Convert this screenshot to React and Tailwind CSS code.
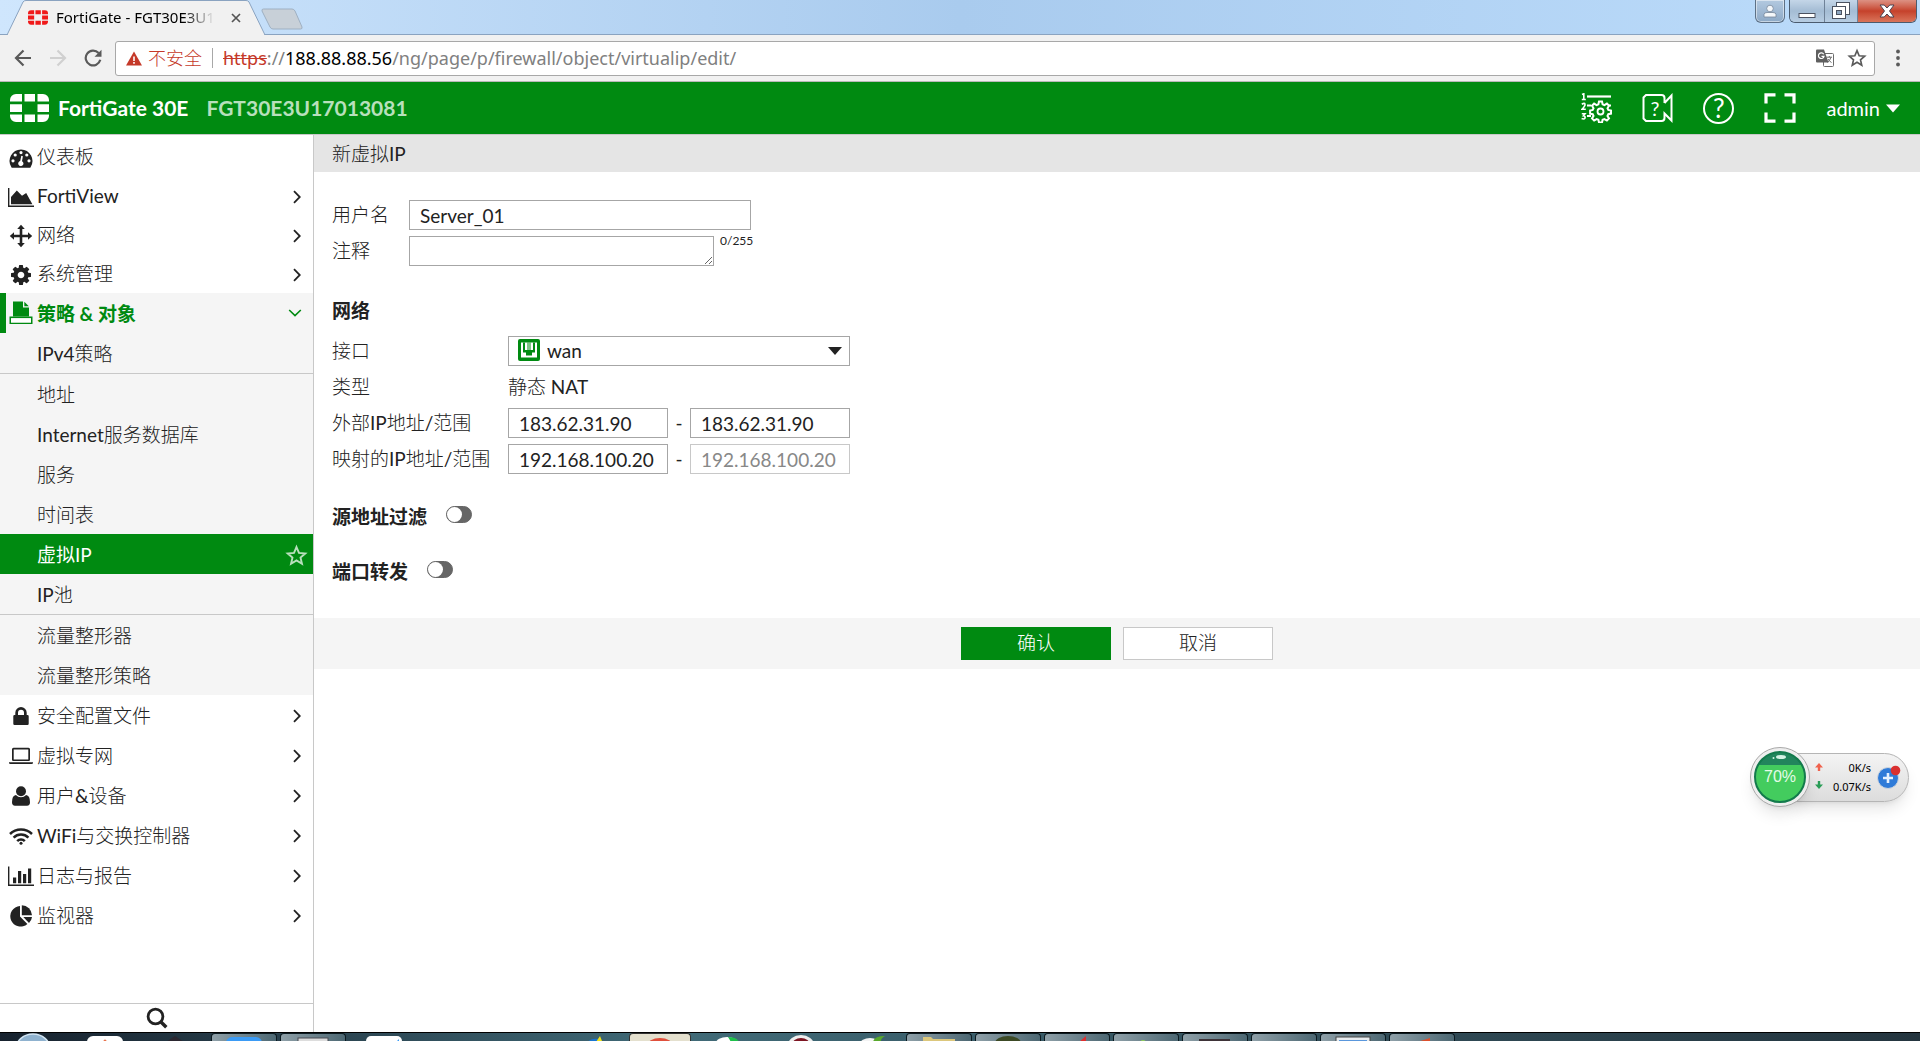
import { useState } from "react";

// ---------- icons ----------

const FortinetLogo = ({ className }) => (
  <svg viewBox="0 0 39 28" className={className} fill="currentColor" aria-hidden="true">
    <path d="M6 0H12V7.500H0V6A6 6 0 0 1 6 0zM14.500 0H25V7.500H14.500zM27.500 0H33A6 6 0 0 1 39 6V7.500H27.500zM0 10.200H12V18H0zM27.500 10.200H39V18H27.500zM0 20.500H12V28H6A6 6 0 0 1 0 22zM14.500 20.500H25V28H14.500zM27.500 20.500H39V22A6 6 0 0 1 33 28H27.500z" />
  </svg>
);

const DashboardIcon = () => (
  <svg viewBox="0 0 24 24" className="w-6 h-6" fill="currentColor">
    <path
      fillRule="evenodd"
      d="M12 3.500A11.500 11.500 0 0 0 2.400 21.200Q2.700 21.700 3.300 21.700H20.700Q21.300 21.700 21.600 21.200A11.500 11.500 0 0 0 12 3.500zM12 5a1.600 1.600 0 1 1 0 3.200a1.600 1.600 0 0 1 0-3.200zM6.200 7.400a1.600 1.600 0 1 1 0 3.200a1.600 1.600 0 0 1 0-3.200zM17.800 7.400a1.600 1.600 0 1 1 0 3.200a1.600 1.600 0 0 1 0-3.200zM4 13.200a1.600 1.600 0 1 1 0 3.200a1.600 1.600 0 0 1 0-3.200zM20 13.200a1.600 1.600 0 1 1 0 3.200a1.600 1.600 0 0 1 0-3.200zM12.300 9.800L13.900 10.200L13 15.200A2.600 2.600 0 1 1 11.200 15z"
    />
  </svg>
);

const AreaIcon = () => (
  <svg viewBox="0 0 26 22" className="w-[26px] h-[22px]" fill="currentColor">
    <path d="M0 2h1.400v17.400H26V21H0zM3 18.200V11L8.800 4.600L14 9.700L18.200 7L24.400 18.200z" />
  </svg>
);

const MoveIcon = () => (
  <svg viewBox="0 0 24 24" className="w-6 h-6" fill="currentColor">
    <path d="M12 .8L15.800 5H13.300V10.700H19V8.200L23.200 12L19 15.800V13.300H13.300V19H15.800L12 23.200L8.200 19H10.700V13.300H5V15.800L.8 12L5 8.200V10.700H10.700V5H8.200z" />
  </svg>
);

const CogIcon = () => (
  <svg viewBox="0 128 1536 1536" className="w-5 h-5" fill="currentColor">
    <path d="M1024 896q0-106-75-181t-181-75-181 75-75 181 75 181 181 75 181-75 75-181zm512-109v222q0 12-8 23t-20 13l-185 28q-19 54-39 91 35 50 107 138 10 12 10 25t-9 23q-27 37-99 108t-94 71q-12 0-26-9l-138-108q-44 23-91 38-16 136-29 186-7 28-36 28h-222q-14 0-24.500-8.500t-11.500-21.500l-28-184q-49-16-90-37l-141 107q-10 9-25 9-14 0-25-11-126-114-165-168-7-10-7-23 0-12 8-23 15-21 51-66.500t54-70.500q-27-50-41-99l-183-27q-13-2-21-12.500t-8-23.500v-222q0-12 8-23t19-13l186-28q14-46 39-92-40-57-107-138-10-12-10-24 0-10 9-23 26-36 98.500-107.500t94.500-71.500q13 0 26 10l138 107q44-23 91-38 16-136 29-186 7-28 36-28h222q14 0 24.500 8.500t11.500 21.500l28 184q49 16 90 37l142-107q9-9 24-9 13 0 25 10 129 119 165 170 7 8 7 22 0 12-8 23-15 21-51 66.500t-54 70.500q26 50 41 98l183 28q13 2 21 12.500t8 23.500z" />
  </svg>
);

const PolicyIcon = () => (
  <svg viewBox="0 0 24 24" className="w-6 h-6" fill="currentColor">
    <path d="M4 .5H14V6.500H20V15.500H4z" />
    <path d="M15.300 .8L19.800 5.300H15.300z" />
    <path
      fillRule="evenodd"
      d="M.5 15.500H23.500V23H.5zM2 17.300V21.500H22V17.300z"
    />
    <path d="M2 17.300H22V21.500H2z" fill="#fff" />
  </svg>
);

const LockIcon = () => (
  <svg viewBox="0 0 16 20" className="w-4 h-5" fill="currentColor">
    <path
      fillRule="evenodd"
      d="M2.300 9V6.700a5.700 5.700 0 0 1 11.400 0V9h.8q1.200 0 1.200 1.200v7.600q0 1.200-1.200 1.200H1.500Q.3 19 .3 17.800v-7.600Q.3 9 1.500 9zM5 9h6V6.700a3 3 0 0 0-6 0z"
    />
  </svg>
);

const LaptopIcon = () => (
  <svg viewBox="0 0 24 18" className="w-6 h-[18px]" fill="currentColor">
    <path
      fillRule="evenodd"
      d="M4.500 .8h15q1.500 0 1.500 1.500v10.400q0 1.300-1.300 1.300H4.300Q3 14 3 12.700V2.300Q3 .8 4.500 .8zM4.700 2.400V12.400H19.300V2.400zM0 15.200H24V16Q24 17 22.500 17H1.500Q0 17 0 16z"
    />
  </svg>
);

const UserIcon = () => (
  <svg viewBox="0 0 18 20" className="w-[18px] h-5" fill="currentColor">
    <circle cx="9" cy="5.200" r="5" />
    <path d="M3.900 9Q6 11.300 9 11.300T14.100 9Q18 9.500 18 16.300Q18 19.700 15 19.700H3Q0 19.700 0 16.300Q0 9.500 3.900 9z" />
  </svg>
);

const WifiIcon = () => (
  <svg viewBox="0 0 24 18" className="w-6 h-[18px]" fill="none" stroke="currentColor" strokeWidth="2.500">
    <path d="M1 7A15.500 15.500 0 0 1 23 7" />
    <path d="M4.600 10.700A10.400 10.400 0 0 1 19.400 10.700" />
    <path d="M8.200 14.200A5.300 5.300 0 0 1 15.800 14.200" />
    <circle cx="12" cy="16.200" r="1.500" fill="currentColor" stroke="none" />
  </svg>
);

const BarsIcon = () => (
  <svg viewBox="0 0 26 22" className="w-[26px] h-[22px]" fill="currentColor">
    <path d="M0 1.500h1.400v18.100H26V21H0zM5 12.500h3.200v5.700H5zM10 6h3.200v12.200H10zM15 9h3.200v9.200H15zM20 3.500h3.200v14.700H20z" />
  </svg>
);

const PieIcon = () => (
  <svg viewBox="0 0 24 24" className="w-6 h-6" fill="currentColor">
    <path d="M11 2V12.500L18.400 20A10.300 10.300 0 1 1 11 2z" />
    <path d="M12.800 1.200A10.300 10.300 0 0 1 23 11.200H12.800z" />
    <path d="M14.300 13H23A10 10 0 0 1 20 19z" />
  </svg>
);

const Chevron = () => (
  <svg viewBox="0 0 8 14" className="w-2 h-[14px]" fill="none" stroke="currentColor" strokeWidth="1.800">
    <path d="M1 1.200L6.800 7L1 12.800" />
  </svg>
);

const ChevronDown = () => (
  <svg viewBox="0 0 14 8" className="w-[14px] h-2" fill="none" stroke="#008a11" strokeWidth="1.600">
    <path d="M1.200 1L7 6.600L12.800 1" />
  </svg>
);

const StarIcon = ({ className }) => (
  <svg viewBox="0 0 24 24" className={className} fill="none" stroke="currentColor" strokeWidth="2" strokeLinejoin="miter">
    <path d="M12 3.200L14.600 9.300L21.200 9.900L16.200 14.200L17.700 20.700L12 17.200L6.300 20.700L7.800 14.200L2.800 9.900L9.400 9.300z" />
  </svg>
);

const SearchIcon = () => (
  <svg viewBox="0 0 22 22" className="w-[22px] h-[22px]" fill="none" stroke="currentColor">
    <circle cx="9.500" cy="9.500" r="7.400" strokeWidth="2.800" />
    <path d="M14.500 14.500L20.300 20.300" strokeWidth="3.400" />
  </svg>
);

// ---------- data ----------

const topMenu = [
  { label: "仪表板", icon: DashboardIcon, leaf: true },
  { label: "FortiView", icon: AreaIcon },
  { label: "网络", icon: MoveIcon },
  { label: "系统管理", icon: CogIcon },
];

const bottomMenu = [
  { label: "安全配置文件", icon: LockIcon },
  { label: "虚拟专网", icon: LaptopIcon },
  { label: "用户&设备", icon: UserIcon },
  { label: "WiFi与交换控制器", icon: WifiIcon },
  { label: "日志与报告", icon: BarsIcon },
  { label: "监视器", icon: PieIcon },
];

const policyGroups = [
  ["IPv4策略"],
  ["地址", "Internet服务数据库", "服务", "时间表", "虚拟IP", "IP池"],
  ["流量整形器", "流量整形策略"],
];

const boldText = "font-['Lato','Noto_Sans_CJK_SC',sans-serif] font-bold";

// ---------- browser chrome ----------

const TabStrip = () => (
  <div className="relative flex h-[35px] shrink-0 items-start bg-linear-to-r from-[#cfe6fd] via-[#a9cbee] to-[#bcdcfb]">
    <div className="absolute inset-x-0 bottom-0 h-px bg-[#8aa3c0]" />
    <div className="relative flex h-[35px] w-[258px] ml-[7px] items-center pl-[21px] pr-6">
      <svg viewBox="0 0 258 35" className="absolute inset-0 w-full h-full" aria-hidden="true">
        <path d="M0 35L16 2Q17 .5 19 .5H239Q241 .5 242 2L258 35z" fill="#f1f1f1" stroke="#8aa3c0" />
        <path d="M1 35H257" stroke="#f1f1f1" strokeWidth="2" />
      </svg>
      <FortinetLogo className="relative w-5 h-[15px] text-[#f01919]" />
      <span className="relative ml-2 whitespace-nowrap text-[15px] mask-r-from-80%">
        FortiGate - FGT30E3U1
      </span>
      <button className="relative ml-auto" aria-label="关闭标签页">
        <svg viewBox="0 0 10 10" className="w-[10px] h-[10px]" stroke="#555" strokeWidth="1.700">
          <path d="M1 1L9 9M9 1L1 9" />
        </svg>
      </button>
    </div>
    <button className="relative mt-2 -ml-1" aria-label="新标签页">
      <svg viewBox="0 0 42 22" className="w-[42px] h-[22px]">
        <path d="M2.500 1H31Q33 1 34 3L41 19Q41.500 21 39.500 21H12Q10 21 9 19L1 3Q.5 1 2.500 1z" fill="#c8d0d8" stroke="#9fb0c2" />
      </svg>
    </button>
    <div className="relative ml-auto mr-[3px] flex">
      <button className="mr-1 flex h-[23px] w-[30px] items-center justify-center rounded-b-md border border-t-0 border-[#5d7085] bg-linear-to-b from-[#b3c9e0] to-[#8da9c6] ring-1 ring-inset ring-white/50" aria-label="用户">
        <svg viewBox="0 0 14 14" className="w-[14px] h-[14px]" fill="#f4f7fa" stroke="#76879a" strokeWidth=".8">
          <path d="M1 13V10.500Q1 8.500 4 8.500H10Q13 8.500 13 10.500V13z" />
          <circle cx="7" cy="4.500" r="3.300" />
        </svg>
      </button>
      <div className="flex h-[23px] overflow-hidden rounded-b-md border border-t-0 border-[#4b5b6e]">
        <button className="flex w-[35px] items-center justify-center border-r border-[#6f8298] bg-linear-to-b from-[#c4d6e8] via-[#a4bcd4] to-[#b7cde2]" aria-label="最小化">
          <svg viewBox="0 0 18 16" className="w-[18px] h-4">
            <rect x="1" y="10.500" width="16" height="4" fill="#fff" stroke="#4b5260" />
          </svg>
        </button>
        <button className="flex w-[33px] items-center justify-center border-r border-[#6f8298] bg-linear-to-b from-[#c4d6e8] via-[#a4bcd4] to-[#b7cde2]" aria-label="还原">
          <svg viewBox="0 0 18 18" className="w-[18px] h-[18px]" stroke="#4b5260">
            <rect x="4.500" y=".5" width="13" height="12" fill="#fff" />
            <rect x=".5" y="4.500" width="13" height="12" fill="#fff" />
            <rect x="4.500" y="8.500" width="5" height="4" fill="#8ea6bf" />
          </svg>
        </button>
        <button className="flex w-[58px] items-center justify-center bg-linear-to-b from-[#dc9183] via-[#c5412b] to-[#d9745a]" aria-label="关闭">
          <svg viewBox="0 0 16 14" className="w-4 h-[14px]">
            <path d="M1 1H5.200L8 4L10.800 1H15L10.500 7L15 13H10.800L8 10L5.200 13H1L5.500 7z" fill="#fff" stroke="#4b4350" />
          </svg>
        </button>
      </div>
    </div>
  </div>
);

const Toolbar = () => (
  <div className="flex h-[47px] shrink-0 items-center border-b border-[#b9b9b9] bg-[#f1f1f1] pl-[14px] pr-5">
    <button aria-label="后退">
      <svg viewBox="0 0 18 18" className="w-[18px] h-[18px]" fill="none" stroke="#5a5a5a" strokeWidth="2.200">
        <path d="M17 9H2.500M9.500 1.500L2 9L9.500 16.500" />
      </svg>
    </button>
    <button className="ml-[17px]" aria-label="前进" disabled>
      <svg viewBox="0 0 18 18" className="w-[18px] h-[18px]" fill="none" stroke="#d0d0d0" strokeWidth="2.200">
        <path d="M1 9H15.500M8.500 1.500L16 9L8.500 16.500" />
      </svg>
    </button>
    <button className="ml-[17px]" aria-label="重新加载">
      <svg viewBox="0 0 18 18" className="w-[18px] h-[18px]" fill="none" stroke="#5a5a5a" strokeWidth="2.200">
        <path d="M14.600 4A7.400 7.400 0 1 0 16.300 10.800" />
        <path d="M17.500 .8V7.800H10.500z" fill="#5a5a5a" stroke="none" />
      </svg>
    </button>
    <div className="ml-[13px] flex h-[35px] flex-1 items-center rounded-[3px] border border-[#a8a8a8] bg-white pl-[10px] pr-[7px] text-[18px]">
      <svg viewBox="0 0 16 15" className="w-4 h-[15px] shrink-0">
        <path d="M8 .5L16 14.500H0z" fill="#c53929" />
        <path d="M7.200 5.500h1.600v4.500H7.200zM7.200 11h1.600v1.700H7.200z" fill="#fff" />
      </svg>
      <span className="ml-[6px] text-[#c53929] font-light">不安全</span>
      <span className="mx-[10px] h-5 w-px bg-[#a8a8a8]" />
      <div className="flex-1 whitespace-nowrap text-[#808080]" role="textbox" aria-label="地址栏" tabIndex={0}>
        <span className="text-[#c53929] line-through">https</span>
        ://<span className="text-black">188.88.88.56</span>
        /ng/page/p/firewall/object/virtualip/edit/
      </div>
      <button aria-label="翻译此页">
        <svg viewBox="0 0 18 18" className="w-[18px] h-[18px]" fill="none">
          <rect x="7.500" y="4.500" width="10" height="13" rx="1" fill="#fff" stroke="#6b6b6b" />
          <path d="M1 .5H8L12.500 13.500H1Q0 13.500 0 12.500V1.500Q0 .5 1 .5z" fill="#5f5f5f" />
          <path d="M7.700 5.300A2.800 2.800 0 1 0 8 7.300H5.500" stroke="#fff" strokeWidth="1.200" />
          <path d="M10.500 8.200H16M13.300 7V8.200M15 8.200Q14 11.500 11.500 13.500M12 10Q13 12 15.500 13.500" stroke="#6b6b6b" />
        </svg>
      </button>
      <button className="ml-[13px]" aria-label="添加书签">
        <StarIcon className="w-5 h-5 text-[#5a5a5a]" />
      </button>
    </div>
    <button className="ml-[21px]" aria-label="菜单">
      <svg viewBox="0 0 4 18" className="w-1 h-[18px]" fill="#5a5a5a">
        <circle cx="2" cy="2.500" r="1.900" />
        <circle cx="2" cy="9" r="1.900" />
        <circle cx="2" cy="15.500" r="1.900" />
      </svg>
    </button>
  </div>
);

// ---------- FortiGate ----------

const Header = () => (
  <header className="flex h-[53px] shrink-0 items-center border-b border-[#c8c8c8] bg-[#008a11] pl-[10px] pr-[20px] text-xl text-white">
    <FortinetLogo className="w-[39px] h-7" />
    <span className="ml-[9px] text-[21px] font-bold">FortiGate 30E</span>
    <span className="ml-[18px] text-[21px] font-bold text-[#b8e0bc]">FGT30E3U17013081</span>
    <div className="ml-auto flex items-center gap-[30px]">
      <button aria-label="命令">
        <svg viewBox="0 0 31 30" className="w-[31px] h-[30px]" fill="none" stroke="#fff" strokeWidth="1.800">
          <path d="M6 3.500H30" strokeWidth="2.200" />
          <path d="M6 23H10M6 12.500H10M27 12.500H30" />
          <path d="M1 1.500L2.800 .8V6.500M.8 6.500H4.800M.8 11.300Q4 9.300 4 11.700Q4 13 1 16.300H4.800M.8 20.800H4L2.400 22.800Q4.500 23 4 25Q3.200 26.500 .6 25.600" strokeWidth="1.600" />
          <circle cx="19.500" cy="18.500" r="3" />
          <path d="M18 8.500h3l.6 2.800 1.800.8 2.500-1.500 2.100 2.100-1.500 2.500.8 1.800 2.700.6v3l-2.700.6-.8 1.800 1.500 2.400-2.100 2.200-2.500-1.500-1.800.7-.6 2.700h-3l-.6-2.700-1.800-.7-2.500 1.500-2.100-2.200 1.500-2.400-.8-1.800-2.600-.6v-3l2.600-.6.8-1.800-1.500-2.500 2.100-2.100 2.500 1.500 1.800-.8z" strokeWidth="2" />
        </svg>
      </button>
      <button className="relative" aria-label="视频帮助">
        <svg viewBox="0 0 31 30" className="w-[31px] h-[30px]" fill="none" stroke="#fff" strokeWidth="2">
          <path d="M22.500 10V5Q22.500 2 19.500 2H4L1.500 4.500V25.500L4 28H19.500Q22.500 28 22.500 25V20.500L29.500 27.500V2.500L22.500 10" />
        </svg>
        <span className="absolute left-2 top-[3px] text-xl leading-6">?</span>
      </button>
      <button className="flex h-[31px] w-[31px] items-center justify-center rounded-full border-2 border-white text-[26px] leading-6" aria-label="帮助">
        ?
      </button>
      <button aria-label="全屏">
        <svg viewBox="0 0 32 30" className="w-8 h-[30px]" fill="none" stroke="#fff" strokeWidth="3.200">
          <path d="M2 10.500V1.800H11.500M20.500 1.800H30V10.500M30 19.500V28.200H20.500M11.500 28.200H2V19.500" />
        </svg>
      </button>
      <button className="flex items-center gap-[6px]">
        admin
        <svg viewBox="0 0 14 9" className="w-[14px] h-[9px]" fill="#fff">
          <path d="M0 .5H14L7 8.500z" />
        </svg>
      </button>
    </div>
  </header>
);

const MenuItem = ({ item, className }) => {
  const Icon = item.icon;
  return (
    <a href="#" className={`flex items-center pl-2 pr-3 pt-0.5 ${className}`}>
      <span className="flex w-[26px] shrink-0 justify-center">
        <Icon />
      </span>
      <span className="ml-[3px] flex-1">{item.label}</span>
      {!item.leaf && <Chevron />}
    </a>
  );
};

const Sidebar = () => {
  const [active, setActive] = useState("虚拟IP");

  return (
    <aside className="flex w-[314px] shrink-0 flex-col border-r border-[#c8c8c8]">
      <nav className="min-h-0 flex-1 overflow-hidden pt-0.5">
        {topMenu.map((item) => (
          <MenuItem key={item.label} item={item} className="h-[39px]" />
        ))}

        <div className="bg-[#f5f5f5]">
          <a href="#" className="flex h-10 items-center border-l-[6px] border-[#008a11] pl-[2px] pr-[11px] text-[#008a11]">
            <span className="flex w-[26px] shrink-0 justify-center">
              <PolicyIcon />
            </span>
            <span className={`ml-[3px] flex-1 pt-0.5 ${boldText}`}>策略 &amp; 对象</span>
            <ChevronDown />
          </a>
          {policyGroups.map((group, i) => (
            <div key={i} className={i > 0 ? "border-t border-[#c8c8c8]" : ""}>
              {group.map((name) => (
                <a
                  key={name}
                  href="#"
                  onClick={() => setActive(name)}
                  className={`flex h-10 items-center justify-between pt-0.5 pl-[37px] pr-[5px] ${
                    active === name
                      ? "bg-[#008a11] font-['Lato','Noto_Sans_CJK_SC',sans-serif] text-white"
                      : ""
                  }`}
                >
                  {name}
                  {active === name && <StarIcon className="w-[23px] h-[23px] text-[#b8e0bc]" />}
                </a>
              ))}
            </div>
          ))}
        </div>

        {bottomMenu.map((item) => (
          <MenuItem key={item.label} item={item} className="h-10" />
        ))}
      </nav>
      <button className="flex h-[29px] items-center justify-center border-t border-[#c8c8c8]" aria-label="搜索">
        <SearchIcon />
      </button>
    </aside>
  );
};

const inputStyle =
  "h-[30px] border border-[#a6a6a6] bg-white px-[10px] outline-none";

const Toggle = ({ id }) => (
  <input
    id={id}
    type="checkbox"
    role="switch"
    className="-mt-[6px] h-[17px] w-[26px] appearance-none rounded-full border border-[#666] bg-[#666] before:block before:h-[15px] before:w-[15px] before:rounded-full before:bg-white checked:bg-[#008a11] checked:before:ml-[9px]"
  />
);

const IpRange = ({ id, start, end, disabled }) => (
  <div className="flex w-[342px] items-center justify-between">
    <input id={id} className={`${inputStyle} w-40`} defaultValue={start} />
    -
    <input
      aria-label="结束IP"
      className={`${inputStyle} w-40 disabled:border-[#c8c8c8] disabled:text-[#888]`}
      defaultValue={end}
      disabled={disabled}
    />
  </div>
);

const VirtualIpForm = () => {
  const [comment, setComment] = useState("");

  return (
    <main className="min-w-0 flex-1">
      <h1 className="flex h-[37px] items-center bg-[#e5e5e5] pl-[18px] pt-0.5">新虚拟IP</h1>
      <form onSubmit={(e) => e.preventDefault()}>
        <div className="flex flex-col pl-[18px] pt-7">
          <div className="grid grid-cols-[77px_1fr] items-center gap-y-[6px]">
            <label htmlFor="name">用户名</label>
            <input id="name" className={`${inputStyle} w-[342px]`} defaultValue="Server_01" />
            <label htmlFor="comment">注释</label>
            <div className="flex gap-[6px]">
              <textarea
                id="comment"
                rows={1}
                maxLength={255}
                value={comment}
                onChange={(e) => setComment(e.target.value)}
                className={`${inputStyle} w-[305px] overflow-hidden`}
              />
              <span className="text-xs leading-[10px]">{comment.length}/255</span>
            </div>
          </div>

          <h2 className={`mt-[30px] h-[30px] leading-[30px] ${boldText}`}>网络</h2>
          <div className="mt-[10px] grid grid-cols-[176px_1fr] auto-rows-[30px] items-center gap-y-[6px]">
            <label htmlFor="interface">接口</label>
            <div className="relative w-[342px]">
              <select id="interface" className={`${inputStyle} block w-full appearance-none pl-[38px]`}>
                <option>wan</option>
              </select>
              <svg viewBox="0 0 22 22" className="pointer-events-none absolute left-[10px] top-[3px] w-[22px] h-[22px]">
                <rect width="22" height="22" rx="2" fill="#008a11" />
                <path d="M3 3.500H19V18.500H3z" fill="#fff" />
                <path d="M5 3.500H7V11H9.500V3.500H10.500V11H11.500V3.500H12.500V11H15V3.500H17V13.500H14V16.500H8V13.500H5z" fill="#008a11" />
              </svg>
              <svg viewBox="0 0 14 8" className="pointer-events-none absolute right-2 top-[11px] w-[14px] h-2" fill="#222">
                <path d="M0 0H14L7 8z" />
              </svg>
            </div>
            <span>类型</span>
            <span>静态 NAT</span>
            <label htmlFor="external">外部IP地址/范围</label>
            <IpRange id="external" start="183.62.31.90" end="183.62.31.90" />
            <label htmlFor="mapped">映射的IP地址/范围</label>
            <IpRange id="mapped" start="192.168.100.20" end="192.168.100.20" disabled />
          </div>

          <div className="mt-7 flex h-[30px] items-center gap-[19px]">
            <label htmlFor="source-filter" className={boldText}>源地址过滤</label>
            <Toggle id="source-filter" />
          </div>
          <div className="mt-[25px] flex h-[30px] items-center gap-[19px]">
            <label htmlFor="port-forward" className={boldText}>端口转发</label>
            <Toggle id="port-forward" />
          </div>
        </div>

        <div className="mt-[31px] flex justify-center gap-3 bg-[#f5f5f5] py-[9px]">
          <button type="submit" className="h-[33px] w-[150px] bg-[#008a11] text-white">
            确认
          </button>
          <button type="button" className="h-[33px] w-[150px] border border-[#c8c8c8] bg-white">
            取消
          </button>
        </div>
      </form>
    </main>
  );
};

// ---------- desktop ----------

const SpeedWidget = () => (
  <div className="absolute right-[11px] top-[747px] flex items-center font-['Noto_Sans'] text-[11px] text-black">
    <div className="relative z-10 flex h-[60px] w-[60px] items-center justify-center rounded-full border border-[#a9a9a9] bg-[#eee] p-[3px] shadow-lg">
      <div className="flex h-full w-full items-center justify-center overflow-hidden rounded-full border-2 border-[#137a4c] bg-linear-to-b from-[#22855c] from-25% to-[#43cc5e] to-25% font-['Liberation_Sans'] text-base text-[#e4fbe8]">
        70%
      </div>
      <svg viewBox="0 0 16 6" className="absolute left-5 top-[6px] w-4 h-[6px]" fill="#d5f2e4">
        <ellipse cx="10" cy="3" rx="5" ry="2" />
        <circle cx="2.500" cy="4" r="1" />
      </svg>
    </div>
    <div className="-ml-5 flex h-[49px] w-[119px] items-center justify-between rounded-r-full border border-[#b5b5b5] bg-linear-to-b from-[#f4f4f4] to-[#dcdcdc] pl-6 pr-[7px] shadow-lg">
      <svg viewBox="0 0 8 28" className="w-2 h-7">
        <path d="M4 0L8 4.500H5.200V8H2.800V4.500H0z" fill="#f0624d" />
        <path d="M4 26L0 21.500H2.800V18H5.200V21.500H8z" fill="#2a9d57" />
      </svg>
      <div className="flex flex-1 flex-col items-end pr-[6px] leading-[19px]">
        <span>0K/s</span>
        <span>0.07K/s</span>
      </div>
      <button aria-label="加速">
        <svg viewBox="0 0 24 24" className="w-6 h-6">
          <circle cx="11" cy="13" r="10.500" fill="#2f7bd8" stroke="#cfd6de" />
          <path d="M11 8V18M6 13H16" stroke="#e6f2ff" strokeWidth="2.600" />
          <circle cx="18.500" cy="5.500" r="4.800" fill="#d93030" />
        </svg>
      </button>
    </div>
  </div>
);

const TaskIcon = ({ children }) => (
  <svg viewBox="0 0 36 9" className="mx-auto w-9 h-[9px]">
    {children}
  </svg>
);

const windowButton =
  "ml-[3px] h-full w-[66px] rounded-t-sm border border-b-0 border-[#0c1a20] bg-linear-to-r from-[#8fa0a8] to-[#4d6873]";

const Taskbar = () => (
  <footer className="flex h-[9px] shrink-0 overflow-hidden border-t border-black bg-linear-to-r from-[#17222e] via-[#416b78] via-35% to-[#24353f]">
    <button className="ml-[15px] w-9" aria-label="开始">
      <TaskIcon>
        <ellipse cx="18" cy="16" rx="17" ry="15" fill="#8fb2cf" stroke="#d4e6f3" strokeWidth="1.500" />
      </TaskIcon>
    </button>
    <button className="ml-9 w-9" aria-label="应用">
      <TaskIcon>
        <rect y="3" width="36" height="14" rx="6" fill="#fff" />
        <circle cx="18" cy="8" r="1.500" fill="#e9734c" />
      </TaskIcon>
    </button>
    <button className="ml-[34px] mr-[15px] w-9" aria-label="应用">
      <TaskIcon>
        <path d="M9 9L18 3L27 9z" fill="#2b2730" />
      </TaskIcon>
    </button>
    <button className={windowButton} aria-label="应用">
      <TaskIcon>
        <rect y="3" width="36" height="14" rx="6" fill="#3b9bf5" />
      </TaskIcon>
    </button>
    <button className={windowButton} aria-label="应用">
      <TaskIcon>
        <rect x="3" y="4" width="30" height="12" fill="#ddd" stroke="#4a4a52" />
      </TaskIcon>
    </button>
    <button className="ml-5 w-9" aria-label="应用">
      <TaskIcon>
        <rect y="3" width="36" height="14" rx="5" fill="#fff" />
        <path d="M30 9L33 6V9z" fill="#3b9bf5" />
      </TaskIcon>
    </button>
    <button className="ml-[180px] mr-[11px] w-9" aria-label="应用">
      <TaskIcon>
        <path d="M5 9Q10 5 16 6L18 9z" fill="#1976d2" />
        <path d="M14 9L18 3L20 8L26 9z" fill="#f2e318" />
      </TaskIcon>
    </button>
    <button className="h-full w-[62px] rounded-t-sm border border-b-0 border-[#333] bg-[#e4e0ce]" aria-label="Chrome">
      <TaskIcon>
        <ellipse cx="18" cy="12" rx="13" ry="8" fill="#e0503c" />
      </TaskIcon>
    </button>
    <button className="ml-5 w-9" aria-label="应用">
      <TaskIcon>
        <ellipse cx="16" cy="10" rx="11" ry="6" fill="#fff" />
        <path d="M17 4Q26 4 28 9H20z" fill="#1fc04a" />
      </TaskIcon>
    </button>
    <button className="ml-9 w-9" aria-label="应用">
      <TaskIcon>
        <ellipse cx="18" cy="12" rx="13" ry="10" fill="#eee" />
        <ellipse cx="18" cy="12" rx="9" ry="7" fill="#7d1522" />
      </TaskIcon>
    </button>
    <button className="ml-9 mr-[12px] w-9" aria-label="应用">
      <TaskIcon>
        <ellipse cx="15" cy="11" rx="10" ry="6" fill="#f4f4f4" />
        <path d="M18 9Q19 3 30 3Q25 6 26 9z" fill="#58a82c" />
      </TaskIcon>
    </button>
    <button className={windowButton} aria-label="文件夹">
      <TaskIcon>
        <path d="M2 9V3H10L12 5H34V9z" fill="#dcc77c" />
      </TaskIcon>
    </button>
    <button className={windowButton} aria-label="应用">
      <TaskIcon>
        <ellipse cx="18" cy="9" rx="13" ry="7" fill="#3c4a25" />
      </TaskIcon>
    </button>
    <button className={windowButton} aria-label="应用">
      <TaskIcon>
        <path d="M19 9L27 2V9z" fill="#e02f2f" />
      </TaskIcon>
    </button>
    <button className={windowButton} aria-label="应用">
      <TaskIcon>
        <circle cx="15" cy="9" r="3" fill="#8fd05a" />
      </TaskIcon>
    </button>
    <button className={windowButton} aria-label="应用">
      <TaskIcon>
        <rect x="2" y="5" width="31" height="6" fill="#3e3338" />
      </TaskIcon>
    </button>
    <button className={windowButton} aria-label="应用" />
    <button className={windowButton} aria-label="应用">
      <TaskIcon>
        <rect x="1" y="3" width="34" height="12" fill="#e8ecef" stroke="#444" />
        <rect x="4" y="6" width="28" height="6" fill="#5a97dc" />
      </TaskIcon>
    </button>
    <button className={windowButton} aria-label="应用">
      <TaskIcon>
        <path d="M10 9L26 4V9z" fill="#dd4f2c" />
      </TaskIcon>
    </button>
  </footer>
);

export default function App() {
  return (
    <div className="relative flex h-screen flex-col overflow-hidden bg-white font-['Noto_Sans','Noto_Sans_CJK_SC',sans-serif] text-black">
      <TabStrip />
      <Toolbar />
      <div className="flex min-h-0 flex-1 flex-col font-['Lato','Noto_Sans_CJK_SC_Light','Noto_Sans_CJK_SC',sans-serif] text-[19px] text-[#222]">
        <Header />
        <div className="flex min-h-0 flex-1">
          <Sidebar />
          <VirtualIpForm />
        </div>
      </div>
      <SpeedWidget />
      <Taskbar />
    </div>
  );
}
